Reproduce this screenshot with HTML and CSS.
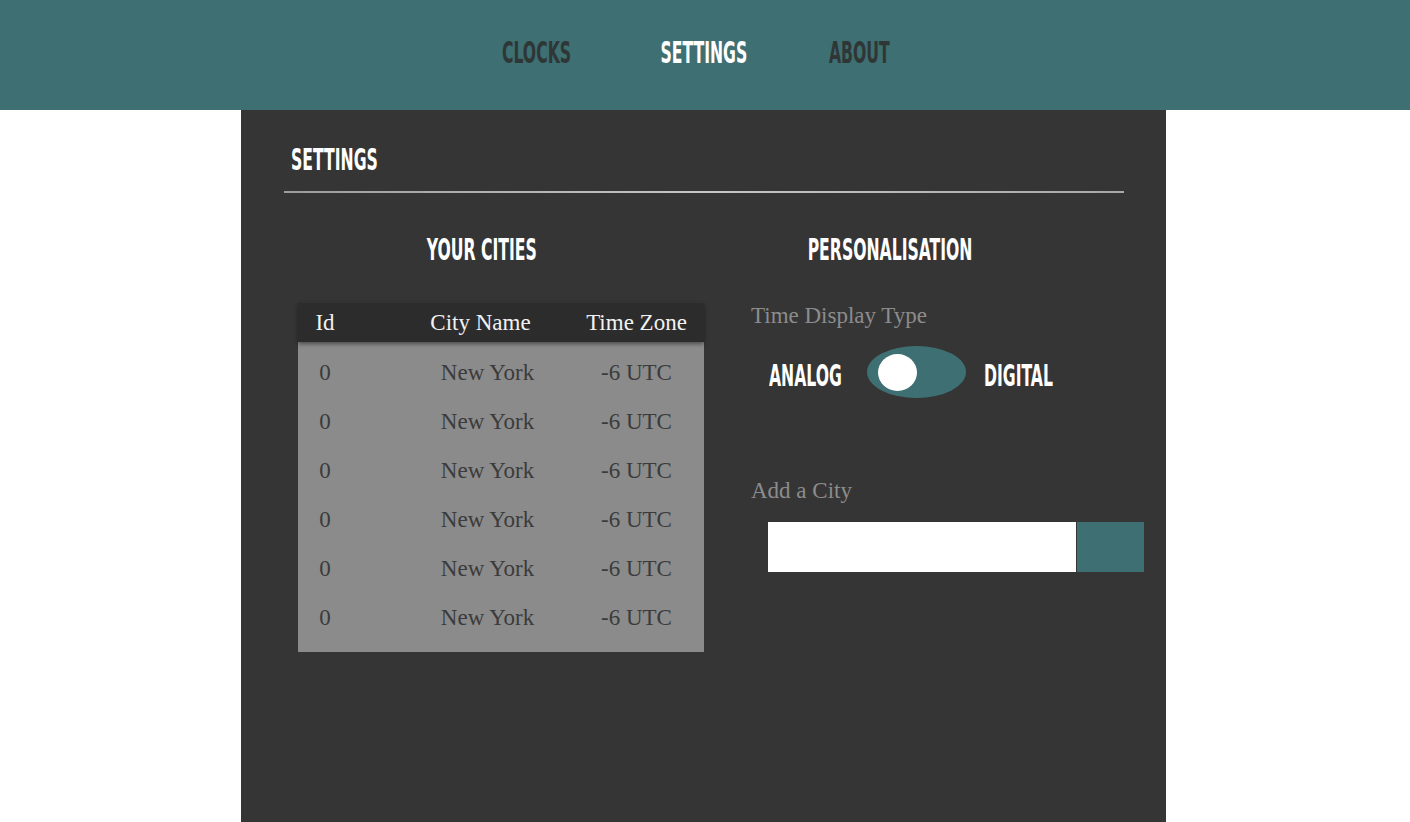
FILE: index.html
```html
<!DOCTYPE html>
<html lang="en">
<head>
<meta charset="utf-8">
<title>World Clocks - Settings</title>
<link rel="stylesheet" href="styles.css">
</head>
<body>
<header class="topbar">
  <nav class="nav">
    <a class="nav-link nav-clocks" href="#"><span class="cond">Clocks</span></a>
    <a class="nav-link nav-settings is-active" href="#"><span class="cond">Settings</span></a>
    <a class="nav-link nav-about" href="#"><span class="cond">About</span></a>
  </nav>
</header>
<main class="panel">
  <h1 class="panel-title"><span class="cond">Settings</span></h1>
  <hr class="divider">
  <div class="columns">
    <section class="col col-cities">
      <h2 class="col-heading"><span class="cond">Your Cities</span></h2>
      <div class="city-table">
        <div class="table-head">
          <span class="cell cell-id">Id</span>
          <span class="cell cell-city">City Name</span>
          <span class="cell cell-tz">Time Zone</span>
        </div>
        <div class="table-body">
          <div class="row"><span class="cell cell-id">0</span><span class="cell cell-city">New York</span><span class="cell cell-tz">-6 UTC</span></div>
          <div class="row"><span class="cell cell-id">0</span><span class="cell cell-city">New York</span><span class="cell cell-tz">-6 UTC</span></div>
          <div class="row"><span class="cell cell-id">0</span><span class="cell cell-city">New York</span><span class="cell cell-tz">-6 UTC</span></div>
          <div class="row"><span class="cell cell-id">0</span><span class="cell cell-city">New York</span><span class="cell cell-tz">-6 UTC</span></div>
          <div class="row"><span class="cell cell-id">0</span><span class="cell cell-city">New York</span><span class="cell cell-tz">-6 UTC</span></div>
          <div class="row"><span class="cell cell-id">0</span><span class="cell cell-city">New York</span><span class="cell cell-tz">-6 UTC</span></div>
        </div>
      </div>
    </section>
    <section class="col col-personal">
      <h2 class="col-heading"><span class="cond">Personalisation</span></h2>
      <p class="field-label">Time Display Type</p>
      <div class="toggle-row">
        <span class="toggle-label"><span class="cond">Analog</span></span>
        <button class="toggle" type="button" aria-label="Toggle display type"><span class="toggle-knob"></span></button>
        <span class="toggle-label toggle-label-right"><span class="cond">Digital</span></span>
      </div>
      <p class="field-label field-label-add">Add a City</p>
      <form class="add-city">
        <input class="add-input" type="text" aria-label="City name">
        <button class="add-button" type="button" aria-label="Add city"></button>
      </form>
    </section>
  </div>
</main>
</body>
</html>
```
FILE: styles.css
```css
* {
  box-sizing: border-box;
}

html,
body {
  margin: 0;
  padding: 0;
  background: #ffffff;
}

body {
  font-family: "Liberation Serif", "DejaVu Serif", serif;
  font-size: 23px;
  line-height: 28px;
}

.cond {
  display: inline-block;
  font-family: "DejaVu Sans Condensed", "DejaVu Sans", sans-serif;
  font-weight: 700;
  font-size: 30px;
  line-height: 30px;
  text-transform: uppercase;
  white-space: nowrap;
  transform: scaleX(0.58);
  transform-origin: center;
}

/* Top bar */
.topbar {
  height: 110px;
  background: #3e6f72;
  padding-top: 38px;
}

.nav {
  display: flex;
  justify-content: center;
  padding-right: 24px;
}

.nav-link {
  display: block;
  text-align: center;
  color: #2f3636;
  text-decoration: none;
  line-height: 30px;
}

.nav-clocks { width: 166px; }
.nav-settings { width: 167px; }
.nav-about { width: 145px; }

.nav-link.is-active {
  color: #ffffff;
}

/* Panel */
.panel {
  width: 925px;
  min-height: calc(100vh - 110px);
  margin: 0 0 0 calc(50% - 464px);
  background: #353535;
  padding: 30px 42px 40px 43px;
  color: #ffffff;
}

.panel-title {
  margin: 0;
  padding-left: 7px;
  height: 30px;
  font-weight: 700;
  line-height: 30px;
}

.panel-title .cond {
  transform-origin: left center;
}

.divider {
  margin: 21px 0 0;
  border: 0;
  height: 2px;
  background: linear-gradient(90deg, #9c9c9c, #c6c6c6 50%, #a8a8a8);
}

.columns {
  display: grid;
  grid-template-columns: 406px 373px;
  column-gap: 47px;
  margin: 40px 0 0 14px;
}

.col-heading {
  margin: 0;
  height: 30px;
  line-height: 30px;
  text-align: center;
  font-weight: 700;
}

.col-cities .col-heading {
  margin-right: 38px;
}

.col-personal .col-heading {
  margin: 0 48px 0 -47px;
}

/* Table */
.city-table {
  margin-top: 40px;
  width: 406px;
}

.table-head,
.row {
  display: grid;
  grid-template-columns: 54px 217px 135px;
  align-items: center;
}

.table-head {
  position: relative;
  height: 39px;
  background: #2c2c2c;
  color: #f2f2f2;
  box-shadow: 0 2px 4px rgba(0, 0, 0, 0.45);
}

.table-body {
  background: #8b8b8b;
  padding: 6px 0 10px;
  color: #3b3b3b;
}

.row {
  height: 49px;
}

.cell {
  text-align: center;
  white-space: nowrap;
}

.table-head .cell-city {
  padding-left: 40px;
}

.row .cell-city {
  padding-left: 54px;
}

/* Personalisation */
.field-label {
  margin: 39px 0 0;
  color: #8c8c8c;
  line-height: 28px;
}

.toggle-row {
  display: flex;
  align-items: flex-start;
  margin: 16px 0 0 18px;
  height: 52px;
}

.toggle-label {
  width: 98px;
  margin-top: 15px;
  line-height: 30px;
}

.toggle-label .cond {
  transform-origin: left center;
}

.toggle-label-right {
  margin-left: 18px;
}

.toggle {
  position: relative;
  width: 99px;
  height: 52px;
  border: 0;
  padding: 0;
  border-radius: 50%;
  background: #3e6f72;
  cursor: pointer;
}

.toggle-knob {
  position: absolute;
  left: 11px;
  top: 8px;
  width: 39px;
  height: 37px;
  border-radius: 50%;
  background: #ffffff;
}

.field-label-add {
  margin-top: 79px;
}

.add-city {
  display: flex;
  margin: 17px 0 0 17px;
  width: 376px;
}

.add-input {
  width: 308px;
  height: 50px;
  border: 0;
  margin: 0;
  padding: 0 12px;
  background: #ffffff;
  font: inherit;
  outline: none;
}

.add-button {
  width: 67px;
  height: 50px;
  margin-left: 1px;
  border: 0;
  padding: 0;
  background: #3e6f72;
  cursor: pointer;
}
```
